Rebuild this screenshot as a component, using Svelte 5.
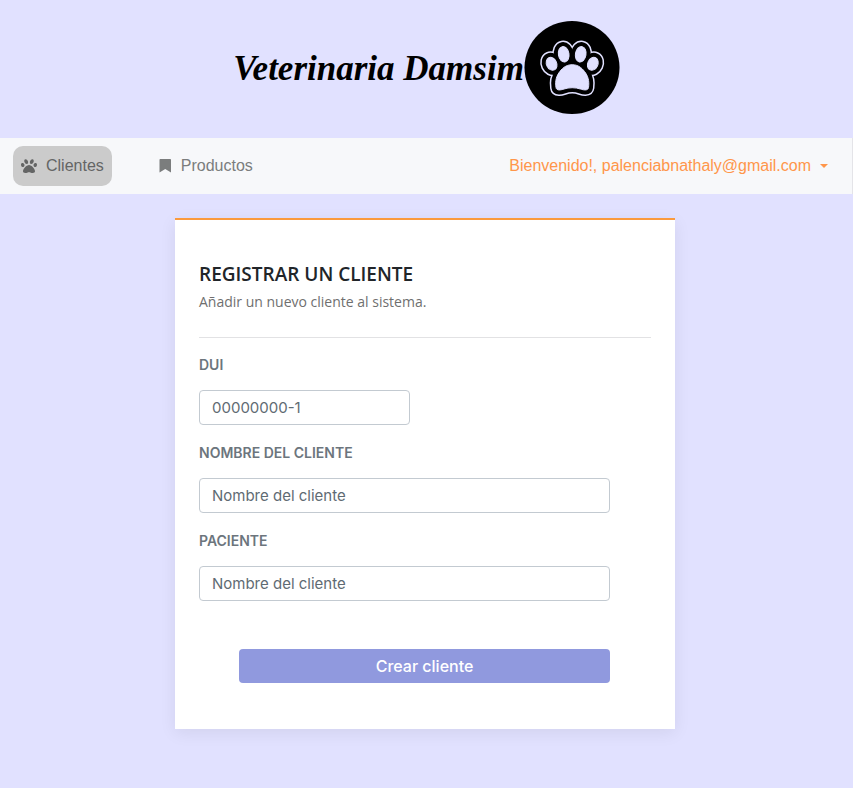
<script>
  let dui = $state('');
  let nombre = $state('');
  let paciente = $state('');
</script>

<svelte:head><title>Veterinaria Damsim</title></svelte:head>

{#snippet paw()}
  <ellipse cx="39.700" cy="34.300" rx="5.300" ry="7.800" transform="rotate(-10 39.700 34.300)" />
  <ellipse cx="56.700" cy="34.300" rx="5.300" ry="7.800" transform="rotate(10 56.700 34.300)" />
  <ellipse cx="27.600" cy="43.800" rx="5.100" ry="6.700" transform="rotate(-25 27.600 43.800)" />
  <ellipse cx="68.800" cy="43.800" rx="5.100" ry="6.700" transform="rotate(25 68.800 43.800)" />
  <path d="M48.200 44.700C41.500 44.700 37.500 49 34.800 53C31.500 58 31.300 63 32 67.500C32.500 71 37 70 40 69C45 67.300 51.400 67.300 56.400 69C59.400 70 64 71 64.500 67.500C65.200 63 64.900 58 61.600 53C58.900 49 54.900 44.700 48.200 44.700Z" />
{/snippet}

<header class="brand">
  <h1>Veterinaria Damsim</h1>
  <svg class="seal" viewBox="0 0 96 94" aria-hidden="true">
    <ellipse cx="48" cy="47.500" rx="47.500" ry="46.500" fill="#000" />
    <g fill="#e1e1ff" stroke-linejoin="round">
      <g stroke="#e1e1ff" stroke-width="12">{@render paw()}</g>
      <g stroke="#000" stroke-width="9">{@render paw()}</g>
      <g stroke="#e1e1ff" stroke-width="1">{@render paw()}</g>
    </g>
  </svg>
</header>

<nav>
  <a class="item active" href="#clientes">
    <svg width="16" height="16" viewBox="0 0 512 512" fill="currentColor" aria-hidden="true">
      <path d="M256 224c-79.400 0-192 122.800-192 200.300C64 459.200 90.800 480 135.800 480c48.900 0 81.100-25.100 120.200-25.100 39.400 0 71.700 25.100 120.200 25.100 45 0 71.800-20.800 71.800-55.700C448 346.800 335.400 224 256 224zm-147.300-12.600c-10.400-34.700-42.400-57.100-71.500-50s-44.300 41-33.900 75.700 42.400 57.100 71.500 50 44.300-41 33.900-75.700zm84.100-20.800c30.900-8.100 43.900-48.600 28.900-90.600s-52.100-69.400-83-61.300-43.900 48.600-28.900 90.600 52.100 69.400 83 61.300zm281.900-29.200c-29.100-7.100-61.100 15.300-71.500 50s4.800 68.600 33.900 75.700 61.100-15.300 71.500-50-4.800-68.600-33.900-75.700zm-155.600 29.200c30.900 8.100 68-19.300 83-61.300s2.100-82.500-28.900-90.600-68 19.300-83 61.300-2.100 82.500 28.900 90.600z" />
    </svg>
    Clientes
  </a>
  <a class="item" href="#productos">
    <svg width="16" height="16" viewBox="0 0 16 16" fill="currentColor" aria-hidden="true">
      <path d="M3.500 1.800Q3.500 1 4.300 1H14.200Q15 1 15 1.800V14.500L9.250 11L3.500 14.500Z" />
    </svg>
    Productos
  </a>
  <button class="account" type="button" aria-haspopup="true">
    Bienvenido!, palenciabnathaly@gmail.com
    <span class="caret"></span>
  </button>
</nav>

<main>
  <form class="card" onsubmit={(e) => e.preventDefault()}>
    <h2>REGISTRAR UN CLIENTE</h2>
    <p>Añadir un nuevo cliente al sistema.</p>
    <hr />
    <label for="dui">DUI</label>
    <input id="dui" class="short" type="text" placeholder="00000000-1" bind:value={dui} />
    <label for="nombre">NOMBRE DEL CLIENTE</label>
    <input id="nombre" type="text" placeholder="Nombre del cliente" bind:value={nombre} />
    <label for="paciente">PACIENTE</label>
    <input id="paciente" type="text" placeholder="Nombre del cliente" bind:value={paciente} />
    <button class="submit" type="submit">Crear cliente</button>
  </form>
</main>

<style>
  :global(body) {
    margin: 0;
    background: #e1e1ff;
  }
  :global(*) {
    box-sizing: border-box;
  }
  .brand {
    display: flex;
    align-items: center;
    justify-content: center;
    padding: 20px 0 24px;
  }
  h1 {
    margin: 0;
    padding-top: 4px;
    font: italic bold 35px/40px 'Liberation Serif', cursive;
    color: #000;
    white-space: nowrap;
  }
  .seal {
    width: 96px;
    height: 94px;
    flex: none;
  }
  nav {
    display: flex;
    align-items: center;
    gap: 36px;
    padding: 8px 24px 8px 13px;
    background: #f7f8fa;
    border-right: 1px solid #e4e4e8;
    font: 16px/24px 'Liberation Sans', Arial, sans-serif;
  }
  .item {
    display: flex;
    align-items: center;
    gap: 9px;
    padding: 8px;
    border-radius: 10px;
    color: #7b7d7d;
    text-decoration: none;
  }
  .active {
    background: #cbcbcb;
    color: #646565;
  }
  .account {
    display: flex;
    align-items: center;
    gap: 9px;
    margin-left: auto;
    padding: 0;
    border: 0;
    background: none;
    color: #ff964a;
    font: inherit;
  }
  .caret {
    border: 4px solid transparent;
    border-top-color: currentColor;
    border-bottom: 0;
  }
  main {
    padding: 24px 3px 59px 0;
  }
  .card {
    display: flex;
    flex-direction: column;
    max-width: 500px;
    margin: 0 auto;
    padding: 40px 24px 46px;
    background: #fff;
    border-top: 2px solid #fb9a3c;
    box-shadow: 0 4px 16px rgba(0, 0, 0, 0.07);
    font-family: 'Open Sans', sans-serif;
  }
  h2 {
    margin: 0;
    font-size: 19px;
    line-height: 28px;
    font-weight: 600;
    color: #212529;
  }
  p {
    margin: 4px 0 0;
    font-size: 14px;
    line-height: 20px;
    color: #6f6f6f;
  }
  hr {
    width: 100%;
    height: 1px;
    margin: 25px 0 17px;
    border: 0;
    background: #e2e2e4;
  }
  label {
    margin-bottom: 15px;
    font: 600 14px/20px Inter, sans-serif;
    color: #6c757d;
  }
  input {
    width: calc(100% - 41px);
    height: 35px;
    margin-bottom: 18px;
    padding: 0 12px;
    border: 1px solid #c3cad1;
    border-radius: 4px;
    background: #fff;
    font: 15px/20px Inter, sans-serif;
    color: #5f6b73;
  }
  input::placeholder {
    color: #5f6b73;
    opacity: 1;
  }
  .short {
    width: 211px;
  }
  .submit {
    height: 34px;
    margin: 30px 41px 0 40px;
    border: 0;
    border-radius: 4px;
    background: #9099de;
    color: #fff;
    font: 500 16px/24px Inter, sans-serif;
  }
</style>
